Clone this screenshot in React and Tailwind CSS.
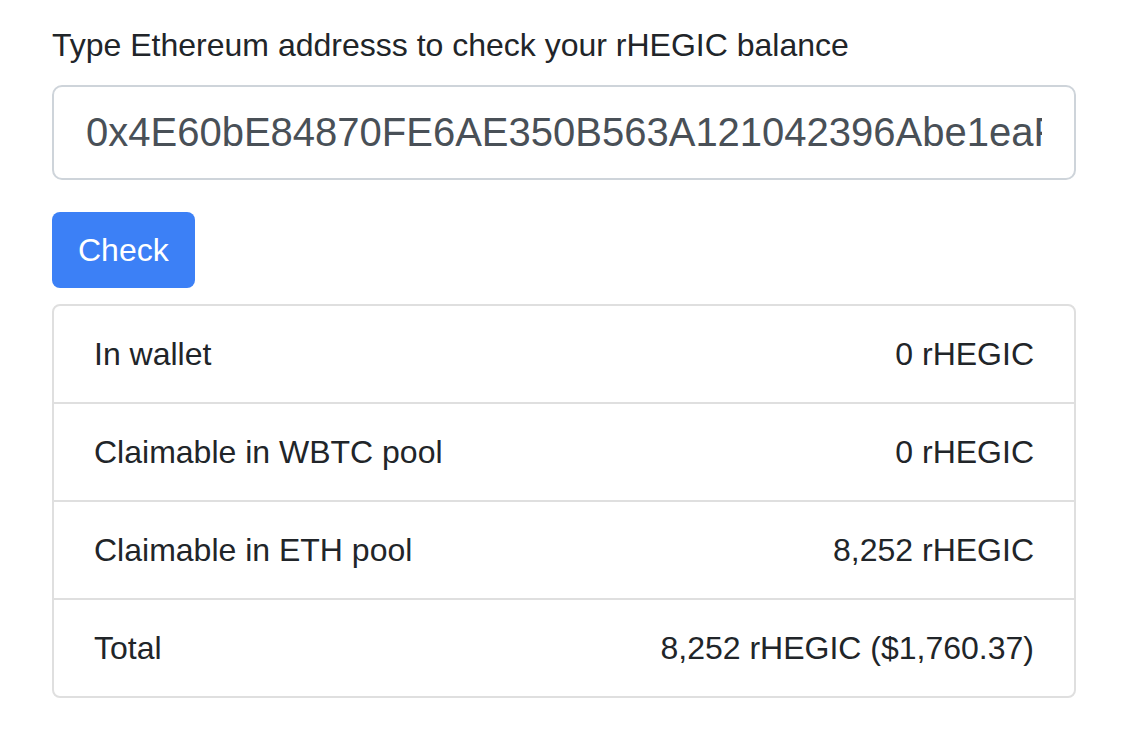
const rows = [
  { label: 'In wallet', value: '0 rHEGIC' },
  { label: 'Claimable in WBTC pool', value: '0 rHEGIC' },
  { label: 'Claimable in ETH pool', value: '8,252 rHEGIC' },
  { label: 'Total', value: '8,252 rHEGIC ($1,760.37)' },
];

export default function App() {
  return (
    <div
      className="min-h-screen bg-white text-[#212529] pt-[21px]"
      style={{ fontFamily: '"Liberation Sans", Arial, Helvetica, sans-serif' }}
    >
      <div className="ml-[52px] w-[1024px]">
        <div className="mb-[32px]">
          <label className="block text-[32px] leading-[48px] mb-[16px]">
            Type Ethereum addresss to check your rHEGIC balance
          </label>
          <input
            type="text"
            readOnly
            value="0x4E60bE84870FE6AE350B563A121042396Abe1eaF"
            className="block w-full h-[95px] px-[32px] text-[40px] leading-[60px] text-[#495057] border-2 border-[#ced4da] rounded-[10px] bg-white outline-none"
            style={{ fontFamily: '"Liberation Sans", Arial, Helvetica, sans-serif' }}
          />
        </div>
        <button className="block h-[76px] px-[26px] text-[32px] leading-[48px] text-white bg-[#3c80f6] rounded-[8px]">
          Check
        </button>
        <div className="mt-[16px] border-2 border-[#dfdfdf] rounded-[8px]">
          {rows.map((r, i) => (
            <div
              key={r.label}
              className={`flex justify-between items-center py-[24px] px-[40px] text-[32px] leading-[48px] ${
                i > 0 ? 'border-t-2 border-[#dfdfdf]' : ''
              }`}
            >
              <span>{r.label}</span>
              <span>{r.value}</span>
            </div>
          ))}
        </div>
      </div>
    </div>
  );
}
